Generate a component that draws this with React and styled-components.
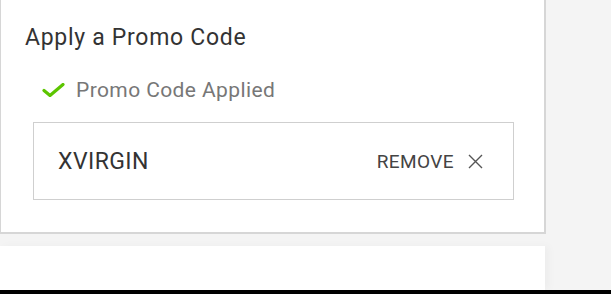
import React from "react";
import styled, { createGlobalStyle } from "styled-components";

const Global = createGlobalStyle`
  html, body { margin: 0; padding: 0; background: #f4f4f4; }
  body { font-family: Roboto, "Liberation Sans", Arial, sans-serif; }
  * { box-sizing: border-box; }
`;

const Page = styled.div`
  width: 611px;
  height: 294px;
  display: flex;
  flex-direction: column;
  overflow: hidden;
`;

const Main = styled.div`
  flex: 1;
  display: flex;
  flex-direction: column;
  gap: 12px;
  width: 546px;
`;

const Card = styled.section`
  background: #fff;
  border-left: 1px solid #d6d6d6;
  border-right: 2px solid #d6d6d6;
  border-bottom: 2px solid #d6d6d6;
  padding: 24px 0 32px 24px;
`;

const Title = styled.h2`
  margin: 0;
  font-size: 23px;
  letter-spacing: 0.7px;
  line-height: 28px;
  font-weight: 400;
  color: #333;
`;

const Status = styled.div`
  display: flex;
  align-items: center;
  gap: 11px;
  margin-top: 26px;
  padding-left: 17px;
  font-size: 21px;
  letter-spacing: 0.4px;
  line-height: 24px;
  color: #777;
`;

const CodeBox = styled.div`
  margin: 20px 0 0 8px;
  width: 481px;
  height: 78px;
  border: 1px solid #cfcfcf;
  display: flex;
  align-items: center;
  justify-content: space-between;
  padding: 0 30px 0 24px;
`;

const Code = styled.span`
  font-size: 23px;
  letter-spacing: 0.4px;
  color: #333;
`;

const Remove = styled.button`
  display: flex;
  align-items: center;
  gap: 14px;
  background: none;
  border: 0;
  padding: 0;
  font-family: inherit;
  font-size: 19px;
  letter-spacing: 0.4px;
  color: #444;
  cursor: pointer;
`;

const NextCard = styled.div`
  flex: 1;
  width: 545px;
  background: #fff;
  box-shadow: 4px 0 8px rgba(0, 0, 0, 0.03);
`;

const Bottom = styled.div`
  height: 4px;
  background: #000;
`;

export default function App() {
  return (
    <Page>
      <Global />
      <Main>
        <Card>
          <Title>Apply a Promo Code</Title>
          <Status>
            <svg width="23" height="14" viewBox="0 0 23 14">
              <path d="M2 7.5 L8 12.5 L21 1.5" fill="none" stroke="#5cc500" strokeWidth="3.2" strokeLinecap="round" strokeLinejoin="round" />
            </svg>
            Promo Code Applied
          </Status>
          <CodeBox>
            <Code>XVIRGIN</Code>
            <Remove>
              REMOVE
              <svg width="15" height="15" viewBox="0 0 15 15">
                <path d="M1 1 L14 14 M14 1 L1 14" stroke="#555" strokeWidth="1.4" />
              </svg>
            </Remove>
          </CodeBox>
        </Card>
        <NextCard />
      </Main>
      <Bottom />
    </Page>
  );
}
